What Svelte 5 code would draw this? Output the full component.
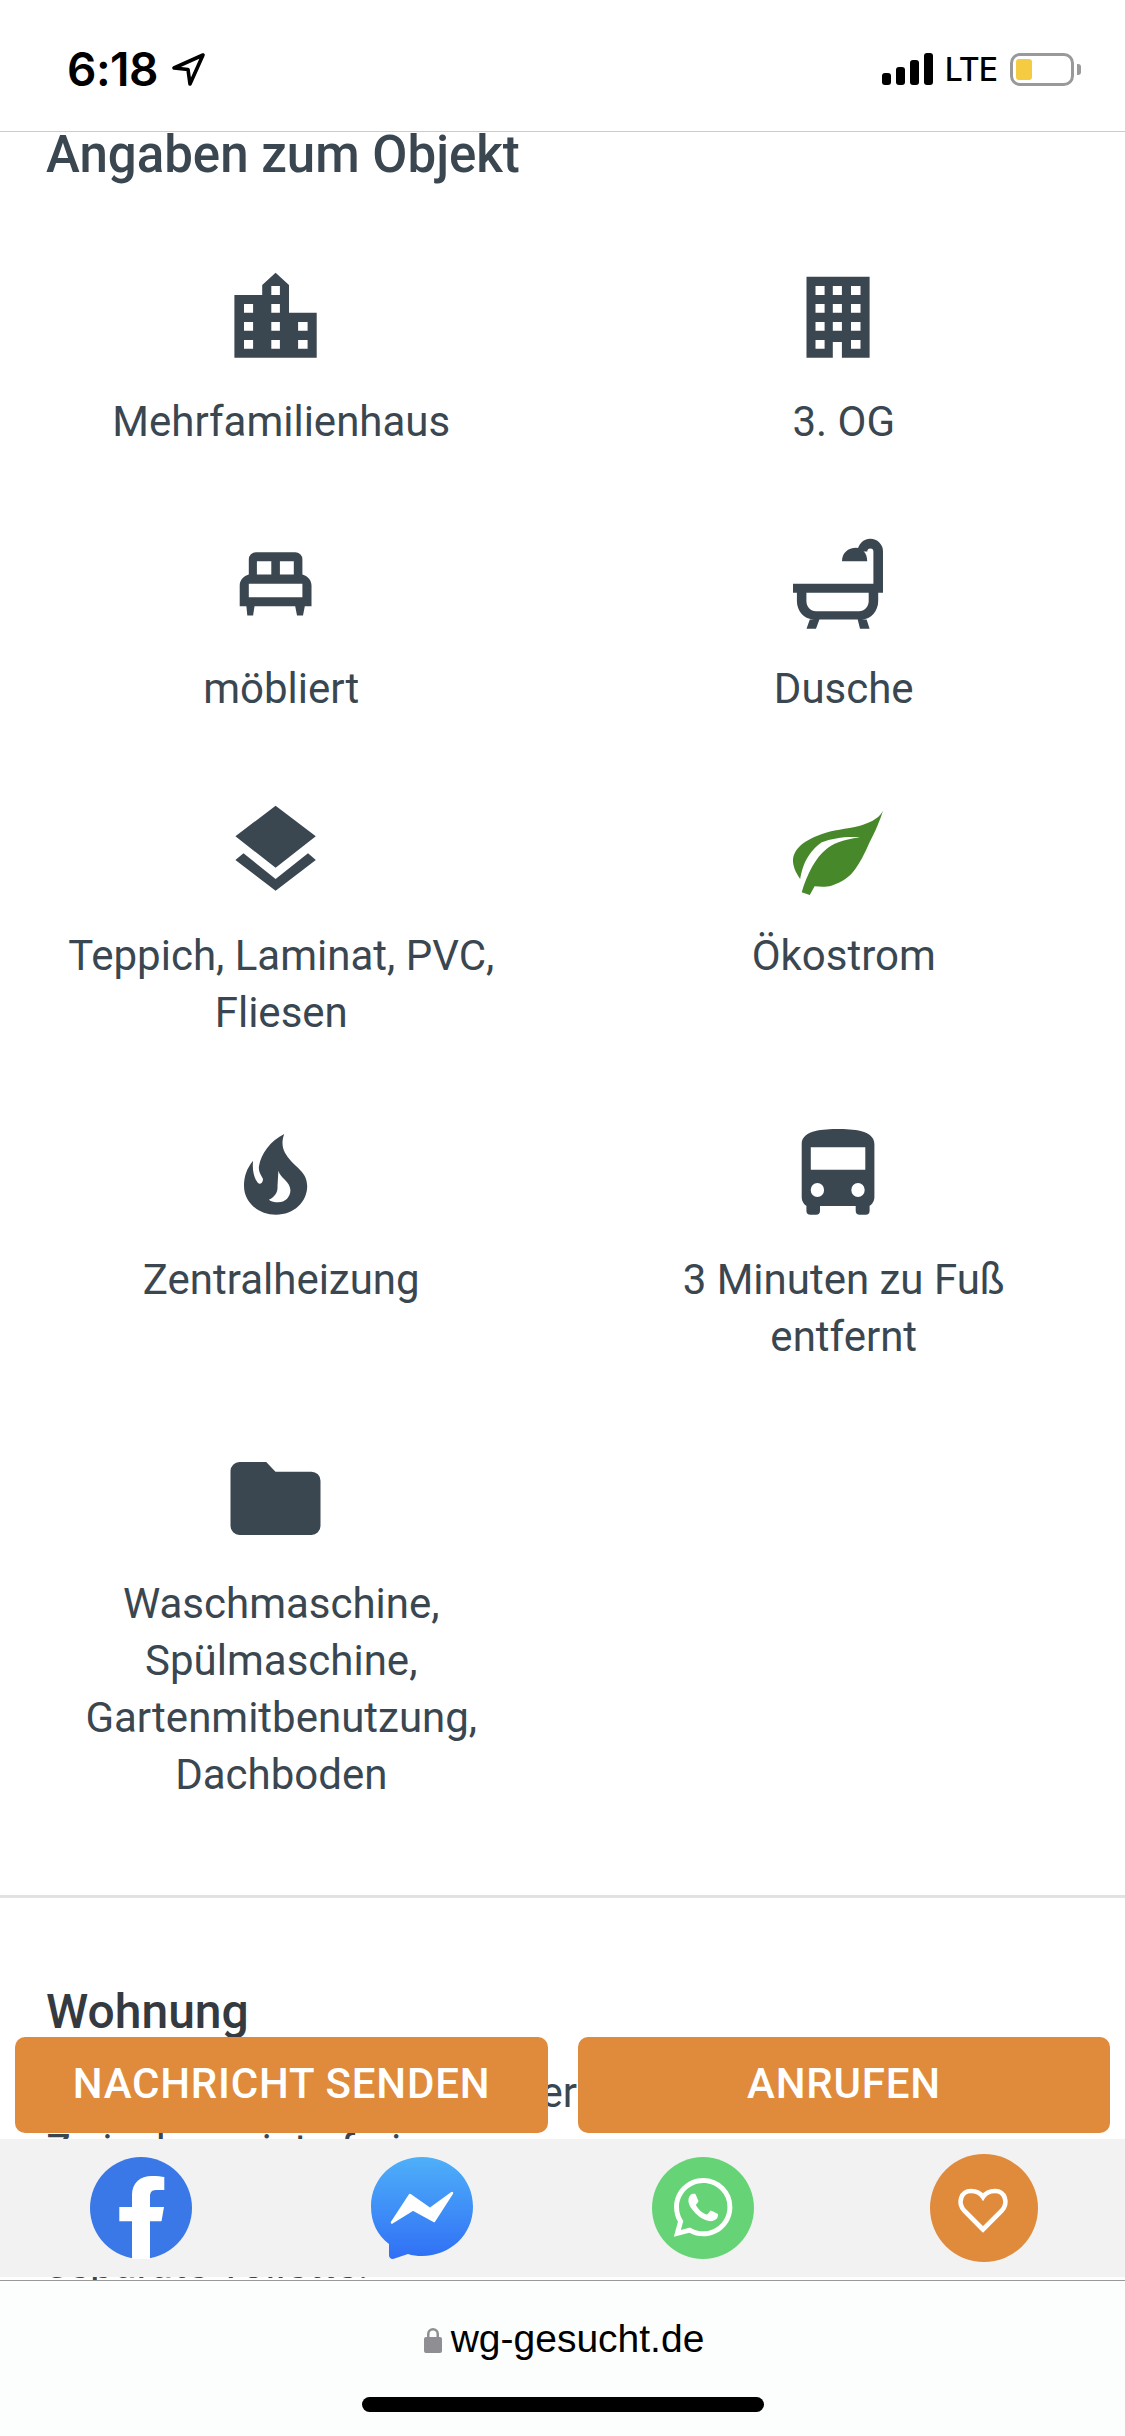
<script lang="ts">
  const INK = "#3a4750";
</script>

<div class="page">
  <header class="status">
    <div class="time">
      <span>6:18</span>
      <svg class="arrow" viewBox="0 0 36 36" width="36" height="36" fill="none" stroke="#000" stroke-width="3.6" stroke-linejoin="round" aria-hidden="true">
        <path d="M33 4 4 17l14 1.5L20 33Z" />
      </svg>
    </div>
    <div class="indicators">
      <div class="signal"><i></i><i></i><i></i><i></i></div>
      <span class="lte">LTE</span>
      <div class="battery"><div class="charge"></div></div>
      <div class="nub"></div>
    </div>
  </header>

  <main>
    <h2 class="first">Angaben zum Objekt</h2>
    <div class="facts">
      <div class="fact">
        <svg class="icon" viewBox="0 0 96 96" fill={INK} fill-rule="evenodd" aria-hidden="true">
          <path d="M6.4 27H34.2V17L47.6 4.7 61 17V44.7H88.7V89.7H6.4ZM43.3 18V27H51.9V18ZM16 36V44.7H25.1V36ZM43.3 36V44.7H51.9V36ZM16 54V62.7H25.1V54ZM43.3 54V62.7H51.9V54ZM70.1 54V62.7H79.6V54ZM16 72V80.7H25.1V72ZM43.3 72V80.7H51.9V72ZM70.1 72V80.7H79.6V72Z" />
        </svg>
        <p>Mehrfamilienhaus</p>
      </div>
      <div class="fact">
        <svg class="icon" viewBox="0 0 96 96" fill={INK} fill-rule="evenodd" aria-hidden="true">
          <path d="M16.5 8.7H79.6V89.7H51.9V74H42.8V89.7H16.5ZM25.5 18V27H34.6V18ZM42.8 18V27H51.9V18ZM61 18V27H70.5V18ZM25.5 36V44.7H34.6V36ZM42.8 36V44.7H51.9V36ZM61 36V44.7H70.5V36ZM25.5 54V62.7H34.6V54ZM42.8 54V62.7H51.9V54ZM61 54V62.7H70.5V54ZM25.5 72V80.7H34.6V72ZM61 72V80.7H70.5V72Z" />
        </svg>
        <p>3. OG</p>
      </div>
      <div class="fact">
        <svg class="icon" viewBox="0 0 96 96" fill={INK} fill-rule="evenodd" aria-hidden="true">
          <path d="M28 17.2H67.2A7.2 7.2 0 0 1 74.4 24.4V39.5C79.6 41 83.5 45 83.5 50.5V71.2H76.8L75 80.5H69L67.2 71.2H26.5L25.1 80.5H19.3L18.4 71.2H11.7V50.5C11.7 45 15.6 41 20.8 39.5V24.4A7.2 7.2 0 0 1 28 17.2ZM28.9 26.2V39.5H43.3V26.2ZM51.9 26.2V39.5H65.8V26.2ZM20.8 48.8V62.2H74.4V48.8Z" />
        </svg>
        <p>möbliert</p>
      </div>
      <div class="fact">
        <svg class="icon" viewBox="0 0 96 96" fill={INK} fill-rule="evenodd" aria-hidden="true">
          <path d="M3 48.8H93V57.8H88.2V66C88.2 76 81 84.5 72 84.5H76.6L79.6 93.8H70L67.7 84.5H29.4L26 93.8H16.5L19.8 84.5H24C14 84.5 6.9 76 6.9 66V57.8H3ZM16.4 57.8V66C16.4 71.5 20.5 76.2 26 76.2H69C74.5 76.2 78.7 71.5 78.7 66V57.8Z" />
          <path d="M52 26.2C52 18 58 12.8 66 12.8 72 12.8 77.2 18 77.2 26.2Z" />
          <path fill="none" stroke={INK} stroke-width="9.6" d="M88.2 50V16.5A7.85 7.85 0 0 0 72.5 16.5" />
        </svg>
        <p>Dusche</p>
      </div>
      <div class="fact">
        <svg class="icon" viewBox="0 0 96 96" fill={INK} aria-hidden="true">
          <path d="M47.6 3.7 87.8 34.3 47.6 65.7 7.4 34.3ZM7.4 58 15.5 51.3 47.6 77 80 51.3 87.8 58 47.6 88.7Z" />
        </svg>
        <p>Teppich, Laminat, PVC, Fliesen</p>
      </div>
      <div class="fact">
        <svg class="icon" viewBox="0 0 96 96" aria-hidden="true">
          <path fill="#46882a" d="M93 8.7C88 18 78 21 70 23.7 56 27 42 28 32 32 18 37 5 44 3 57 2.5 64 6 71 10.2 77 12 68 15 52 31.8 40.3 42 36 58 34 70 35.3 52 38 42 42 36.5 47 26 55 17 72 11.7 90.3L19.8 93 24.6 84.3C31 85 37 85 41.3 83.7 52 80 60 75 65.3 67 73 56 76 48 79.6 40.3 86 28 90 18 93 8.7Z" />
        </svg>
        <p>Ökostrom</p>
      </div>
      <div class="fact">
        <svg class="icon" viewBox="0 0 96 96" fill={INK} fill-rule="evenodd" aria-hidden="true">
          <path d="M56.2 8C42 15 33 28 31 40 30 46 34 50 35 53 35 57 32 59 30 57 26 52 24 44 25.1 34.7 19 42 16 50 16 60 16 76 30 88.7 48 88.7 66 88.7 79.2 76 79.2 60 79.2 47 69 42 63 35 56 27 52 20 56.2 8ZM50.4 44.7C52 52 62 55 62.4 64 62.5 71 57 76.3 50.4 76.3 46.5 76.3 43 75.5 40.9 73.7 47 71 50 66 49.5 60Z" />
        </svg>
        <p>Zentralheizung</p>
      </div>
      <div class="fact">
        <svg class="icon" viewBox="0 0 96 96" fill={INK} fill-rule="evenodd" aria-hidden="true">
          <path d="M48 3C62 3 84.4 4 84.4 18V71C84.4 75 82 78.5 79.6 79.7V84.7A4 4 0 0 1 75.6 88.7H69.7A4 4 0 0 1 65.7 84.7V80H30V84.7A4 4 0 0 1 26 88.7H20.4A4 4 0 0 1 16.4 84.7V79.7C14 78.5 11.7 75 11.7 71V18C11.7 4 34 3 48 3ZM20.8 21.3V43.7H75.3V21.3ZM27.4 57A6.7 7 0 1 0 27.4 71 6.7 7 0 1 0 27.4 57ZM68 57A6.7 7 0 1 0 68 71 6.7 7 0 1 0 68 57Z" />
        </svg>
        <p>3 Minuten zu Fuß entfernt</p>
      </div>
      <div class="fact">
        <svg class="icon" viewBox="0 0 96 96" fill={INK} aria-hidden="true">
          <path d="M11.5 12H38.2L47.5 21.7H83.5A9 9 0 0 1 92.5 30.7V76A9 9 0 0 1 83.5 85H11.5A9 9 0 0 1 2.5 76V21A9 9 0 0 1 11.5 12Z" />
        </svg>
        <p>Waschmaschine, Spülmaschine, Gartenmitbenutzung, Dachboden</p>
      </div>
    </div>

    <hr />

    <h2 class="dark">Wohnung</h2>
    <ul>
      <li>Wohnung mit Bad und Keller</li>
      <li>Zwischenmiete frei</li>
      <li>Balkon</li>
      <li>separate Toilette.</li>
    </ul>
  </main>

  <div class="bottom">
    <div class="actions">
      <button type="button">NACHRICHT SENDEN</button>
      <button type="button">ANRUFEN</button>
    </div>

    <div class="share">
      <svg class="round" viewBox="0 0 102 102" aria-hidden="true">
        <circle cx="51" cy="51" r="51" fill="#3b78e7" />
        <path fill="#fff" d="M42 102V64.3H29.3V50H42V38C42 26 50 19 62 19 67 19 72 19.5 74.3 20V33H66C61 33 60 36 60 40V50H74L71.5 64.3H60V102Z" />
      </svg>
      <svg class="round" viewBox="0 0 102 102" aria-hidden="true">
        <defs>
          <linearGradient id="mess" x1="0" y1="0" x2="0" y2="1">
            <stop offset="0" stop-color="#4fb0f9" />
            <stop offset="1" stop-color="#2f6ff5" />
          </linearGradient>
        </defs>
        <path fill="url(#mess)" d="M51 0C79 0 102 21 102 49.5S79 99 51 99C46 99 41 98.4 37 97L22 102C19 102 18 100 18 98V87C6 78 0 65 0 49.5 0 21 23 0 51 0Z" />
        <path fill="#fff" stroke="#fff" stroke-width="2.5" stroke-linejoin="round" d="M21 65.5 39 38 59 52 81 36 63 64 42 52.5Z" />
      </svg>
      <svg class="round" viewBox="0 0 102 102" aria-hidden="true">
        <circle cx="51" cy="51" r="51" fill="#67d377" />
        <path transform="translate(21.7 21) scale(2.45)" fill="#fff" d="M17.472 14.382c-.297-.149-1.758-.867-2.03-.967-.273-.099-.471-.148-.67.15-.197.297-.767.966-.94 1.164-.173.199-.347.223-.644.075-.297-.15-1.255-.463-2.39-1.475-.883-.788-1.48-1.761-1.653-2.059-.173-.297-.018-.458.13-.606.134-.133.298-.347.446-.52.149-.174.198-.298.298-.497.099-.198.05-.371-.025-.52-.075-.149-.669-1.612-.916-2.207-.242-.579-.487-.5-.669-.51-.173-.008-.371-.01-.57-.01-.198 0-.52.074-.792.372-.272.297-1.04 1.016-1.04 2.479 0 1.462 1.065 2.875 1.213 3.074.149.198 2.096 3.2 5.077 4.487.709.306 1.262.489 1.694.625.712.227 1.36.195 1.871.118.571-.085 1.758-.719 2.006-1.413.248-.694.248-1.289.173-1.413-.074-.124-.272-.198-.57-.347m-5.421 7.403h-.004a9.87 9.87 0 01-5.031-1.378l-.361-.214-3.741.982.998-3.648-.235-.374a9.86 9.86 0 01-1.51-5.26c.001-5.45 4.436-9.884 9.888-9.884 2.64 0 5.122 1.03 6.988 2.898a9.825 9.825 0 012.893 6.994c-.003 5.45-4.437 9.884-9.885 9.884m8.413-18.297A11.815 11.815 0 0012.05 0C5.495 0 .16 5.335.157 11.892c0 2.096.547 4.142 1.588 5.945L.057 24l6.305-1.654a11.882 11.882 0 005.683 1.448h.005c6.554 0 11.89-5.335 11.893-11.893a11.821 11.821 0 00-3.48-8.413z" />
      </svg>
      <svg class="heart" viewBox="0 0 108 108" aria-hidden="true">
        <circle cx="54" cy="54" r="54" fill="#e08b3c" />
        <path fill="none" stroke="#fff" stroke-width="4.6" d="M53 75.5 34.5 57C27 49 31 37 41 37 47 37 51 40 53 43 55 40 59 37 65 37 75 37 79 49 71.5 57Z" />
      </svg>
    </div>

    <div class="safari">
      <div class="address">
        <svg class="lock" viewBox="0 0 18 27" width="18" height="27" aria-hidden="true">
          <path fill="#8e8e93" fill-rule="evenodd" d="M3 11V8A6 6 0 0 1 15 8V11H16A2 2 0 0 1 18 13V25A2 2 0 0 1 16 27H2A2 2 0 0 1 0 25V13A2 2 0 0 1 2 11ZM5.5 11H12.5V8A3.5 3.5 0 0 0 5.5 8Z" />
        </svg>
        <span>wg-gesucht.de</span>
      </div>
      <div class="home"></div>
    </div>
  </div>
</div>

<style>
  :global(body) {
    margin: 0;
    background: #fff;
  }
  .page {
    position: relative;
    width: 1125px;
    height: 2436px;
    overflow: hidden;
    background: #fff;
    font-family: Roboto, sans-serif;
    color: #3a4750;
  }
  .status {
    box-sizing: border-box;
    height: 132px;
    padding: 48px 44px 0 67px;
    display: flex;
    justify-content: space-between;
    align-items: flex-start;
    border-bottom: 1px solid #ccc;
  }
  .time {
    display: flex;
    align-items: center;
    height: 42px;
    gap: 12px;
    font-family: Inter, sans-serif;
    font-weight: 600;
    font-size: 46px;
    letter-spacing: -0.5px;
    color: #000;
  }
  .indicators {
    display: flex;
    align-items: center;
    height: 42px;
  }
  .signal {
    display: flex;
    align-items: flex-end;
    gap: 5px;
    height: 32px;
    margin-right: 12px;
  }
  .signal i {
    width: 9px;
    background: #000;
    border-radius: 3px;
  }
  .signal i:nth-child(1) { height: 12px; }
  .signal i:nth-child(2) { height: 18px; }
  .signal i:nth-child(3) { height: 25px; }
  .signal i:nth-child(4) { height: 32px; }
  .lte {
    font-family: Inter, sans-serif;
    font-weight: 500;
    font-size: 32px;
    letter-spacing: -1px;
    color: #000;
    margin-right: 13px;
  }
  .battery {
    box-sizing: border-box;
    width: 64px;
    height: 33px;
    padding: 3px;
    border: 3px solid #999;
    border-radius: 10px;
  }
  .charge {
    width: 16px;
    height: 21px;
    background: #f5cb42;
    border-radius: 3px;
  }
  .nub {
    width: 4px;
    height: 11px;
    margin-left: 3px;
    background: #999;
    border-radius: 0 3px 3px 0;
  }

  h2 {
    margin: 0;
    font-size: 48px;
    line-height: 48px;
    font-weight: 500;
    padding-left: 46px;
  }
  h2.first {
    font-size: 51px;
    line-height: 46px;
  }
  h2.dark {
    margin-top: 90px;
    color: #343a40;
  }
  .facts {
    margin-top: 90px;
    display: grid;
    grid-template-columns: 1fr 1fr;
    row-gap: 85px;
  }
  .fact {
    padding: 0 46px;
    display: flex;
    flex-direction: column;
    align-items: center;
    text-align: center;
    min-width: 0;
  }
  .icon {
    width: 96px;
    height: 96px;
    margin-right: 11px;
    flex-shrink: 0;
  }
  .fact p {
    margin: 29px 0 0;
    font-size: 42px;
    line-height: 57px;
  }
  hr {
    margin: 92px 0 0;
    border: 0;
    border-top: 3px solid #e2e2e2;
  }
  ul {
    list-style: none;
    margin: 28px 0 0;
    padding: 0 0 0 46px;
    font-size: 42px;
    line-height: 57px;
    white-space: nowrap;
  }
  li:first-child {
    word-spacing: 1px;
  }

  .bottom {
    position: absolute;
    left: 0;
    right: 0;
    bottom: 0;
    display: flex;
    flex-direction: column;
  }
  .actions {
    display: grid;
    grid-template-columns: 533px 532px;
    justify-content: space-between;
    padding: 0 15px;
    margin-bottom: 6px;
  }
  .actions button {
    height: 96px;
    padding: 0 0 4px;
    border: 0;
    border-radius: 10px;
    background: #e08b3c;
    color: #fff;
    font-family: Roboto, sans-serif;
    font-weight: 500;
    font-size: 42px;
    letter-spacing: 0.8px;
  }
  .share {
    height: 138px;
    margin-bottom: 3px;
    background: #f2f2f2;
    display: grid;
    grid-template-columns: repeat(4, 1fr);
    align-items: center;
    justify-items: center;
  }
  .round {
    width: 102px;
    height: 102px;
  }
  .heart {
    width: 108px;
    height: 108px;
  }
  .safari {
    box-sizing: border-box;
    height: 156px;
    border-top: 1px solid #999;
    background: #fcfdfd;
    display: flex;
    flex-direction: column;
    align-items: center;
    padding-top: 34px;
  }
  .address {
    display: flex;
    align-items: center;
    gap: 9px;
    height: 48px;
    margin-left: 3px;
    font-family: "Liberation Sans", sans-serif;
    font-size: 39px;
    color: #000;
  }
  .home {
    width: 402px;
    height: 15px;
    margin-top: 34px;
    background: #000;
    border-radius: 8px;
  }
</style>
